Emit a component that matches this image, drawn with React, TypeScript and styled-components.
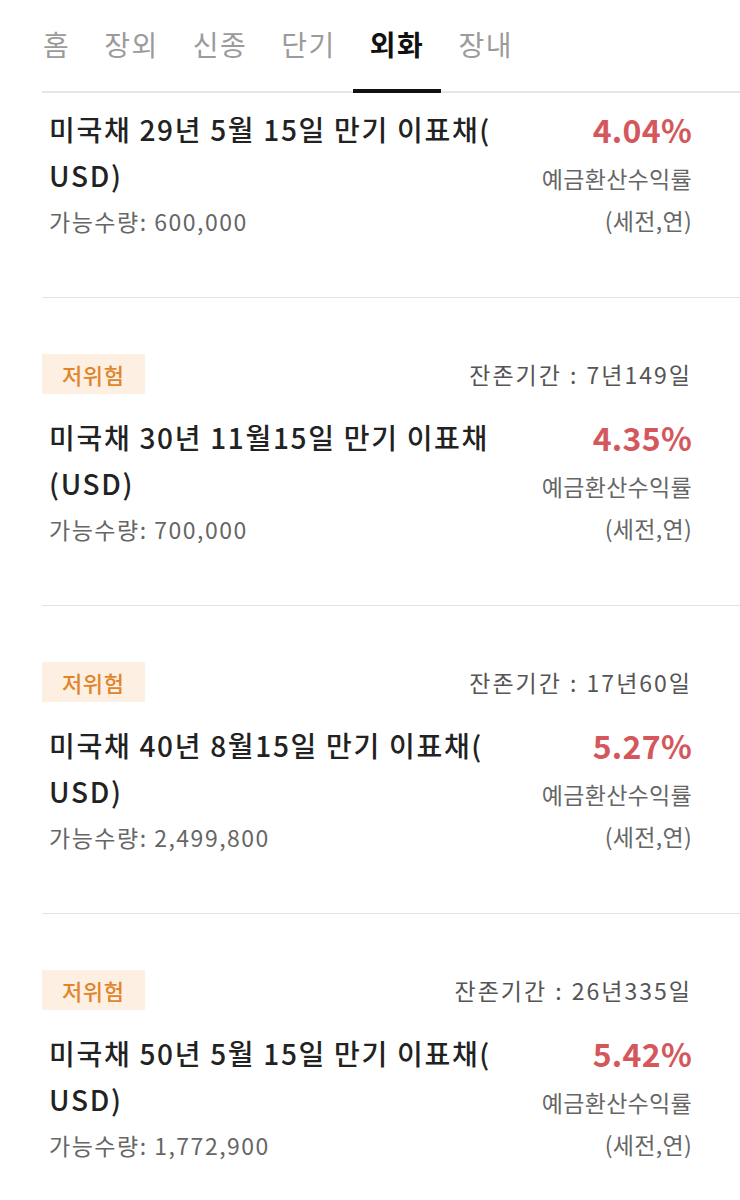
import React from "react";
import styled, { createGlobalStyle } from "styled-components";

const GlobalStyle = createGlobalStyle`
  html, body {
    margin: 0;
    padding: 0;
    background: #ffffff;
  }
  body {
    font-family: "Noto Sans CJK KR", "Noto Sans", sans-serif;
    -webkit-font-smoothing: antialiased;
  }
`;

const Page = styled.div`
  width: 740px;
  overflow: hidden;
  background: #ffffff;
`;

const TabBar = styled.nav`
  display: flex;
  margin-left: 42px;
  height: 93px;
  box-sizing: border-box;
  border-bottom: 2px solid #e6e6e8;
`;

const TabList = styled.div`
  display: flex;
  align-items: flex-end;
  margin-left: -16px;
  margin-bottom: -2px;
`;

const Tab = styled.div<{ $active?: boolean }>`
  padding: 0 17px;
  height: 93px;
  box-sizing: border-box;
  padding-top: 24px;
  font-size: 28px;
  line-height: 40px;
  letter-spacing: 1.5px;
  color: ${(p) => (p.$active ? "#111111" : "#9b9b9b")};
  font-weight: ${(p) => (p.$active ? 700 : 400)};
  border-bottom: 4px solid ${(p) => (p.$active ? "#111111" : "transparent")};
  white-space: nowrap;
`;

const List = styled.div`
  display: flex;
  flex-direction: column;
`;

const Item = styled.section<{ $first?: boolean }>`
  margin-left: 42px;
  padding: ${(p) => (p.$first ? "13px 48px 56px 0" : "56px 48px 56px 0")};
  border-bottom: 1px solid #e2e2e6;
  display: flex;
  flex-direction: column;
  gap: 20px;
`;

const HeaderRow = styled.div`
  display: flex;
  justify-content: space-between;
  align-items: center;
  height: 40px;
`;

const Badge = styled.span`
  display: inline-flex;
  align-items: center;
  height: 40px;
  padding: 0 20px;
  background: #fdf0e2;
  color: #e0852c;
  font-size: 22px;
  font-weight: 500;
  letter-spacing: 0.6px;
`;

const Period = styled.span`
  font-size: 23px;
  color: #555555;
  letter-spacing: 2px;
  word-spacing: 1px;
`;

const Body = styled.div`
  display: flex;
  justify-content: space-between;
  align-items: flex-start;
`;

const Left = styled.div`
  width: 470px;
  padding-left: 7px;
  box-sizing: border-box;
  display: flex;
  flex-direction: column;
`;

const Title = styled.h3`
  margin: 0;
  font-size: 28px;
  line-height: 46px;
  font-weight: 500;
  color: #222222;
  letter-spacing: 1.7px;
  white-space: nowrap;
`;

const TitleLine = styled.span`
  display: block;
`;

const Qty = styled.div`
  margin-top: 3px;
  font-size: 23px;
  line-height: 40px;
  color: #666666;
  letter-spacing: 1.5px;
`;

const Right = styled.div`
  display: flex;
  flex-direction: column;
  align-items: flex-end;
  text-align: right;
`;

const Rate = styled.div`
  font-size: 32px;
  line-height: 46px;
  font-weight: 700;
  color: #d4575c;
  letter-spacing: 0.3px;
`;

const RateLabel = styled.div<{ $top?: boolean }>`
  margin-top: ${(p) => (p.$top ? "5px" : "0")};
  font-size: 23px;
  line-height: 42px;
  color: #666666;
  white-space: nowrap;
  letter-spacing: 0.3px;
`;

type Bond = {
  title: string[];
  qty: string;
  rate: string;
  period?: string;
};

const tabs = ["홈", "장외", "신종", "단기", "외화", "장내"];

const bonds: Bond[] = [
  { title: ["미국채 29년 5월 15일 만기 이표채(", "USD)"], qty: "600,000", rate: "4.04%" },
  { title: ["미국채 30년 11월15일 만기 이표채", "(USD)"], qty: "700,000", rate: "4.35%", period: "7년149일" },
  { title: ["미국채 40년 8월15일 만기 이표채(", "USD)"], qty: "2,499,800", rate: "5.27%", period: "17년60일" },
  { title: ["미국채 50년 5월 15일 만기 이표채(", "USD)"], qty: "1,772,900", rate: "5.42%", period: "26년335일" },
];

export default function App() {
  return (
    <Page>
      <GlobalStyle />
      <TabBar>
        <TabList>
          {tabs.map((t) => (
            <Tab key={t} $active={t === "외화"}>
              {t}
            </Tab>
          ))}
        </TabList>
      </TabBar>
      <List>
        {bonds.map((b, i) => (
          <Item key={b.title.join("")} $first={i === 0}>
            {b.period && (
              <HeaderRow>
                <Badge>저위험</Badge>
                <Period>잔존기간 : {b.period}</Period>
              </HeaderRow>
            )}
            <Body>
              <Left>
                <Title>
                  {b.title.map((line) => (
                    <TitleLine key={line}>{line}</TitleLine>
                  ))}
                </Title>
                <Qty>가능수량: {b.qty}</Qty>
              </Left>
              <Right>
                <Rate>{b.rate}</Rate>
                <RateLabel $top>예금환산수익률</RateLabel>
                <RateLabel>(세전,연)</RateLabel>
              </Right>
            </Body>
          </Item>
        ))}
      </List>
    </Page>
  );
}
